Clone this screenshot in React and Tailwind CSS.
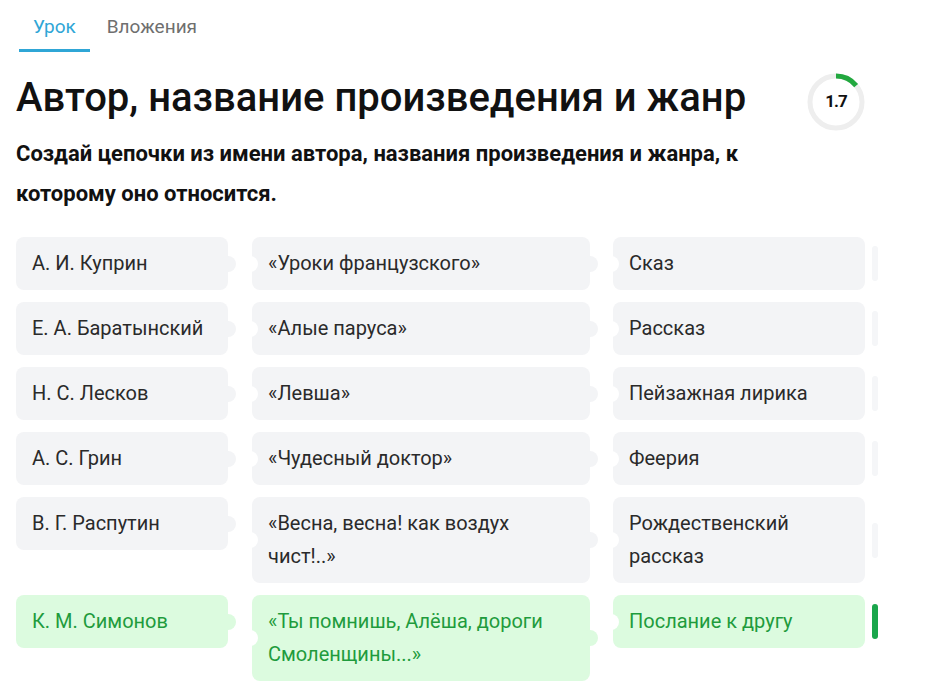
import { useState } from 'react';

const rows = [
  { author: 'А. И. Куприн', title: '«Уроки французского»', genre: 'Сказ' },
  { author: 'Е. А. Баратынский', title: '«Алые паруса»', genre: 'Рассказ' },
  { author: 'Н. С. Лесков', title: '«Левша»', genre: 'Пейзажная лирика' },
  { author: 'А. С. Грин', title: '«Чудесный доктор»', genre: 'Феерия' },
  { author: 'В. Г. Распутин', title: '«Весна, весна! как воздух чист!..»', genre: 'Рождественский рассказ' },
  { author: 'К. М. Симонов', title: '«Ты помнишь, Алёша, дороги Смоленщины...»', genre: 'Послание к другу', done: true },
];

// One piece of the chain: a bump on the right, a notch on the left
function Piece({ children, width, done, bump, notch }) {
  const bg = done ? 'bg-[#dcfbdf]' : 'bg-[#f3f4f6]';
  return (
    <div
      className={`relative rounded-lg px-4 py-[10px] text-[20px] leading-[33px] ${bg} ${
        done ? 'text-[#1f9b3d]' : 'text-[#2a2a2a]'
      }`}
      style={{ width }}
    >
      {notch && (
        <span className="absolute left-[-10px] top-1/2 h-4 w-4 -translate-y-1/2 rounded-full bg-white" />
      )}
      {children}
      {bump && (
        <span className={`absolute right-[-8px] top-1/2 h-4 w-4 -translate-y-1/2 rounded-full ${bg}`} />
      )}
    </div>
  );
}

function Ring({ value }) {
  const r = 26;
  const c = 2 * Math.PI * r;
  const part = 0.14;
  return (
    <div className="relative h-[58px] w-[58px]">
      <svg width="58" height="58" viewBox="0 0 58 58" className="-rotate-90">
        <circle cx="29" cy="29" r={r} fill="none" stroke="#eeeeee" strokeWidth="5" />
        <circle
          cx="29"
          cy="29"
          r={r}
          fill="none"
          stroke="#22a83f"
          strokeWidth="5"
          strokeDasharray={`${c * part} ${c}`}
        />
      </svg>
      <span className="absolute inset-0 flex items-center justify-center text-[17px] font-bold tracking-[-1px] text-[#111]">
        {value}
      </span>
    </div>
  );
}

export default function App() {
  const [tab, setTab] = useState('lesson');

  return (
    <div className="min-h-[691px] bg-white pl-4 font-['Roboto',sans-serif]">
      <div className="ml-[3px] flex gap-[3px]">
        <button
          onClick={() => setTab('lesson')}
          className={`flex h-[52px] items-center border-b-[3px] px-[14px] pt-[5px] text-[19px] ${
            tab === 'lesson' ? 'border-[#2fa6d6] text-[#2fa6d6]' : 'border-transparent text-[#6f6f6f]'
          }`}
        >
          Урок
        </button>
        <button
          onClick={() => setTab('files')}
          className={`flex h-[52px] items-center border-b-[3px] px-[14px] pt-[5px] text-[19px] ${
            tab === 'files' ? 'border-[#2fa6d6] text-[#2fa6d6]' : 'border-transparent text-[#6f6f6f]'
          }`}
        >
          Вложения
        </button>
      </div>

      <div className="mt-[22px] flex w-[849px] items-start justify-between">
        <h1 className="text-[40px] font-medium leading-[48px] text-[#111]">
          Автор, название произведения и жанр
        </h1>
        <div className="-mt-px">
          <Ring value="1.7" />
        </div>
      </div>

      <p className="mt-[3px] w-[780px] text-[22px] font-bold leading-10 text-[#111]">
        Создай цепочки из имени автора, названия произведения и жанра, к которому оно относится.
      </p>

      <div className="mt-[23px] flex flex-col gap-3">
        {rows.map((row) => (
          <div key={row.author} className="flex items-start">
            <Piece width={212} done={row.done} bump>
              {row.author}
            </Piece>
            <div className="ml-6">
              <Piece width={338} done={row.done} bump notch>
                {row.title}
              </Piece>
            </div>
            <div className="ml-[23px] flex items-center gap-[7px]">
              <Piece width={252} done={row.done} notch>
                {row.genre}
              </Piece>
              <span
                className={`h-[35px] w-[6px] rounded-full ${row.done ? 'bg-[#1aa64c]' : 'bg-[#f5f6f8]'}`}
              />
            </div>
          </div>
        ))}
      </div>
    </div>
  );
}
